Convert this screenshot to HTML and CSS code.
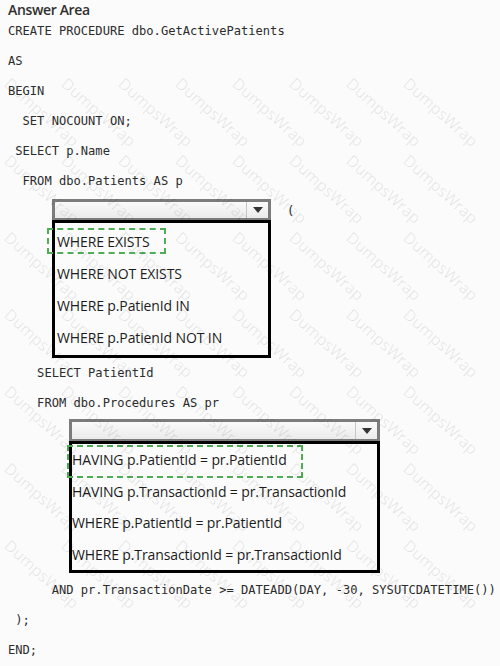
FILE: index.html
```html
<!DOCTYPE html>
<html lang="en">
<head>
<meta charset="utf-8">
<title>Answer Area</title>
<link rel="stylesheet" href="styles.css">
</head>
<body>
<div class="page">
  <div class="title">Answer Area</div>
  <div class="code">CREATE PROCEDURE dbo.GetActivePatients</div>
  <div class="code">AS</div>
  <div class="code">BEGIN</div>
  <div class="code">  SET NOCOUNT ON;</div>
  <div class="code"> SELECT p.Name</div>
  <div class="code">  FROM dbo.Patients AS p</div>

  <div class="pick pick-1">
    <div class="pick-row">
      <div class="select"><span class="select-arrow"></span></div>
      <span class="paren">(</span>
    </div>
    <ul class="options">
      <li class="option">WHERE EXISTS</li>
      <li class="option">WHERE NOT EXISTS</li>
      <li class="option">WHERE p.PatienId IN</li>
      <li class="option">WHERE p.PatienId NOT IN</li>
      <li class="answer"></li>
    </ul>
  </div>

  <div class="code code-after">    SELECT PatientId</div>
  <div class="code">    FROM dbo.Procedures AS pr</div>

  <div class="pick pick-2">
    <div class="pick-row">
      <div class="select"><span class="select-arrow"></span></div>
    </div>
    <ul class="options">
      <li class="option">HAVING p.PatientId = pr.PatientId</li>
      <li class="option">HAVING p.TransactionId = pr.TransactionId</li>
      <li class="option">WHERE p.PatientId = pr.PatientId</li>
      <li class="option">WHERE p.TransactionId = pr.TransactionId</li>
      <li class="answer"></li>
    </ul>
  </div>

  <div class="code code-and">      AND pr.TransactionDate &gt;= DATEADD(DAY, -30, SYSUTCDATETIME())</div>
  <div class="code"> );</div>
  <div class="code">END;</div>
</div>

<div class="wm" aria-hidden="true">
  <span class="wm-cell"><span class="wm-word">DumpsWrap</span></span>
  <span class="wm-cell"><span class="wm-word">DumpsWrap</span></span>
  <span class="wm-cell"><span class="wm-word">DumpsWrap</span></span>
  <span class="wm-cell"><span class="wm-word">DumpsWrap</span></span>
  <span class="wm-cell"><span class="wm-word">DumpsWrap</span></span>
  <span class="wm-cell"><span class="wm-word">DumpsWrap</span></span>
  <span class="wm-cell"><span class="wm-word">DumpsWrap</span></span>
  <span class="wm-cell"><span class="wm-word">DumpsWrap</span></span>
  <span class="wm-cell"><span class="wm-word">DumpsWrap</span></span>
  <span class="wm-cell"><span class="wm-word">DumpsWrap</span></span>
  <span class="wm-cell"><span class="wm-word">DumpsWrap</span></span>
  <span class="wm-cell"><span class="wm-word">DumpsWrap</span></span>
  <span class="wm-cell"><span class="wm-word">DumpsWrap</span></span>
  <span class="wm-cell"><span class="wm-word">DumpsWrap</span></span>
  <span class="wm-cell"><span class="wm-word">DumpsWrap</span></span>
  <span class="wm-cell"><span class="wm-word">DumpsWrap</span></span>
  <span class="wm-cell"><span class="wm-word">DumpsWrap</span></span>
  <span class="wm-cell"><span class="wm-word">DumpsWrap</span></span>
  <span class="wm-cell"><span class="wm-word">DumpsWrap</span></span>
  <span class="wm-cell"><span class="wm-word">DumpsWrap</span></span>
  <span class="wm-cell"><span class="wm-word">DumpsWrap</span></span>
  <span class="wm-cell"><span class="wm-word">DumpsWrap</span></span>
  <span class="wm-cell"><span class="wm-word">DumpsWrap</span></span>
  <span class="wm-cell"><span class="wm-word">DumpsWrap</span></span>
  <span class="wm-cell"><span class="wm-word">DumpsWrap</span></span>
  <span class="wm-cell"><span class="wm-word">DumpsWrap</span></span>
  <span class="wm-cell"><span class="wm-word">DumpsWrap</span></span>
  <span class="wm-cell"><span class="wm-word">DumpsWrap</span></span>
  <span class="wm-cell"><span class="wm-word">DumpsWrap</span></span>
  <span class="wm-cell"><span class="wm-word">DumpsWrap</span></span>
  <span class="wm-cell"><span class="wm-word">DumpsWrap</span></span>
  <span class="wm-cell"><span class="wm-word">DumpsWrap</span></span>
  <span class="wm-cell"><span class="wm-word">DumpsWrap</span></span>
  <span class="wm-cell"><span class="wm-word">DumpsWrap</span></span>
  <span class="wm-cell"><span class="wm-word">DumpsWrap</span></span>
  <span class="wm-cell"><span class="wm-word">DumpsWrap</span></span>
  <span class="wm-cell"><span class="wm-word">DumpsWrap</span></span>
  <span class="wm-cell"><span class="wm-word">DumpsWrap</span></span>
  <span class="wm-cell"><span class="wm-word">DumpsWrap</span></span>
  <span class="wm-cell"><span class="wm-word">DumpsWrap</span></span>
  <span class="wm-cell"><span class="wm-word">DumpsWrap</span></span>
  <span class="wm-cell"><span class="wm-word">DumpsWrap</span></span>
  <span class="wm-cell"><span class="wm-word">DumpsWrap</span></span>
  <span class="wm-cell"><span class="wm-word">DumpsWrap</span></span>
  <span class="wm-cell"><span class="wm-word">DumpsWrap</span></span>
  <span class="wm-cell"><span class="wm-word">DumpsWrap</span></span>
  <span class="wm-cell"><span class="wm-word">DumpsWrap</span></span>
  <span class="wm-cell"><span class="wm-word">DumpsWrap</span></span>
  <span class="wm-cell"><span class="wm-word">DumpsWrap</span></span>
  <span class="wm-cell"><span class="wm-word">DumpsWrap</span></span>
  <span class="wm-cell"><span class="wm-word">DumpsWrap</span></span>
  <span class="wm-cell"><span class="wm-word">DumpsWrap</span></span>
  <span class="wm-cell"><span class="wm-word">DumpsWrap</span></span>
  <span class="wm-cell"><span class="wm-word">DumpsWrap</span></span>
  <span class="wm-cell"><span class="wm-word">DumpsWrap</span></span>
  <span class="wm-cell"><span class="wm-word">DumpsWrap</span></span>
</div>
</body>
</html>
```

FILE: styles.css
```css
html, body {
  margin: 0;
  padding: 0;
}

body {
  position: relative;
  width: 500px;
  height: 666px;
  overflow: hidden;
  background: #fbfbfb;
}

.page {
  display: flex;
  flex-direction: column;
  padding: 0 8px;
}

.title {
  height: 16px;
  font: 600 14px/19.4px "Open Sans", sans-serif;
  color: #303030;
  letter-spacing: -0.35px;
}

.code {
  height: 30px;
  font: 12.1px/30px "DejaVu Sans Mono", monospace;
  white-space: pre;
  color: #2c2c2c;
}

.code-and {
  margin-top: 2px;
}

.pick {
  display: flex;
  flex-direction: column;
  align-items: flex-start;
}

.pick-1 {
  margin: 3px 0 0 44px;
}

.pick-2 {
  margin: 1px 0 0 61px;
}

.pick-row {
  display: flex;
  align-items: center;
  gap: 16px;
}

.select {
  box-sizing: border-box;
  height: 21px;
  border: 3px solid #7c7c7c;
  border-bottom-width: 2px;
  background: linear-gradient(#fafafa, #ebebeb);
  display: flex;
  justify-content: flex-end;
}

.pick-1 .select,
.pick-1 .options {
  width: 219px;
}

.pick-2 .select {
  height: 22px;
}

.pick-2 .select,
.pick-2 .options {
  width: 311px;
}

.select-arrow {
  width: 21px;
  border-left: 1px solid #c6c6c6;
  display: flex;
  align-items: center;
  justify-content: center;
}

.select-arrow::before {
  content: "";
  border-left: 5px solid transparent;
  border-right: 5px solid transparent;
  border-top: 6px solid #333;
}

.paren {
  font: 12.1px/1 "DejaVu Sans Mono", monospace;
  color: #2c2c2c;
  margin-top: 3px;
}

.options {
  position: relative;
  box-sizing: border-box;
  list-style: none;
  margin: 0;
  border: 3px solid #000;
}

.pick-1 .options {
  padding: 3px 0 1px 2px;
}

.pick-2 .options {
  padding: 0;
}

.option {
  font: 14px "Open Sans", sans-serif;
  color: #1c1c1c;
  letter-spacing: -0.12px;
  white-space: nowrap;
}

.pick-1 .option {
  height: 32px;
  line-height: 32px;
}

.pick-2 .option {
  height: 31.5px;
  line-height: 31.5px;
}

.answer {
  position: absolute;
  box-sizing: border-box;
  border: 2px dashed #4fae55;
  pointer-events: none;
}

.pick-1 .answer {
  left: -8px;
  top: 5px;
  width: 119px;
  height: 26px;
}

.pick-2 .answer {
  left: -5px;
  top: 1px;
  width: 236px;
  height: 33px;
}

.wm {
  position: absolute;
  inset: 0;
  display: grid;
  grid-template-columns: repeat(8, 57px);
  grid-auto-rows: 77px;
  padding: 73px 0 0 13px;
  pointer-events: none;
}

.wm-cell {
  display: flex;
  align-items: center;
  justify-content: center;
}

.wm-word {
  flex: none;
  font: 16px/1 "Open Sans", sans-serif;
  color: rgba(0, 0, 0, 0.09);
  transform: rotate(42deg);
  white-space: nowrap;
}
```
